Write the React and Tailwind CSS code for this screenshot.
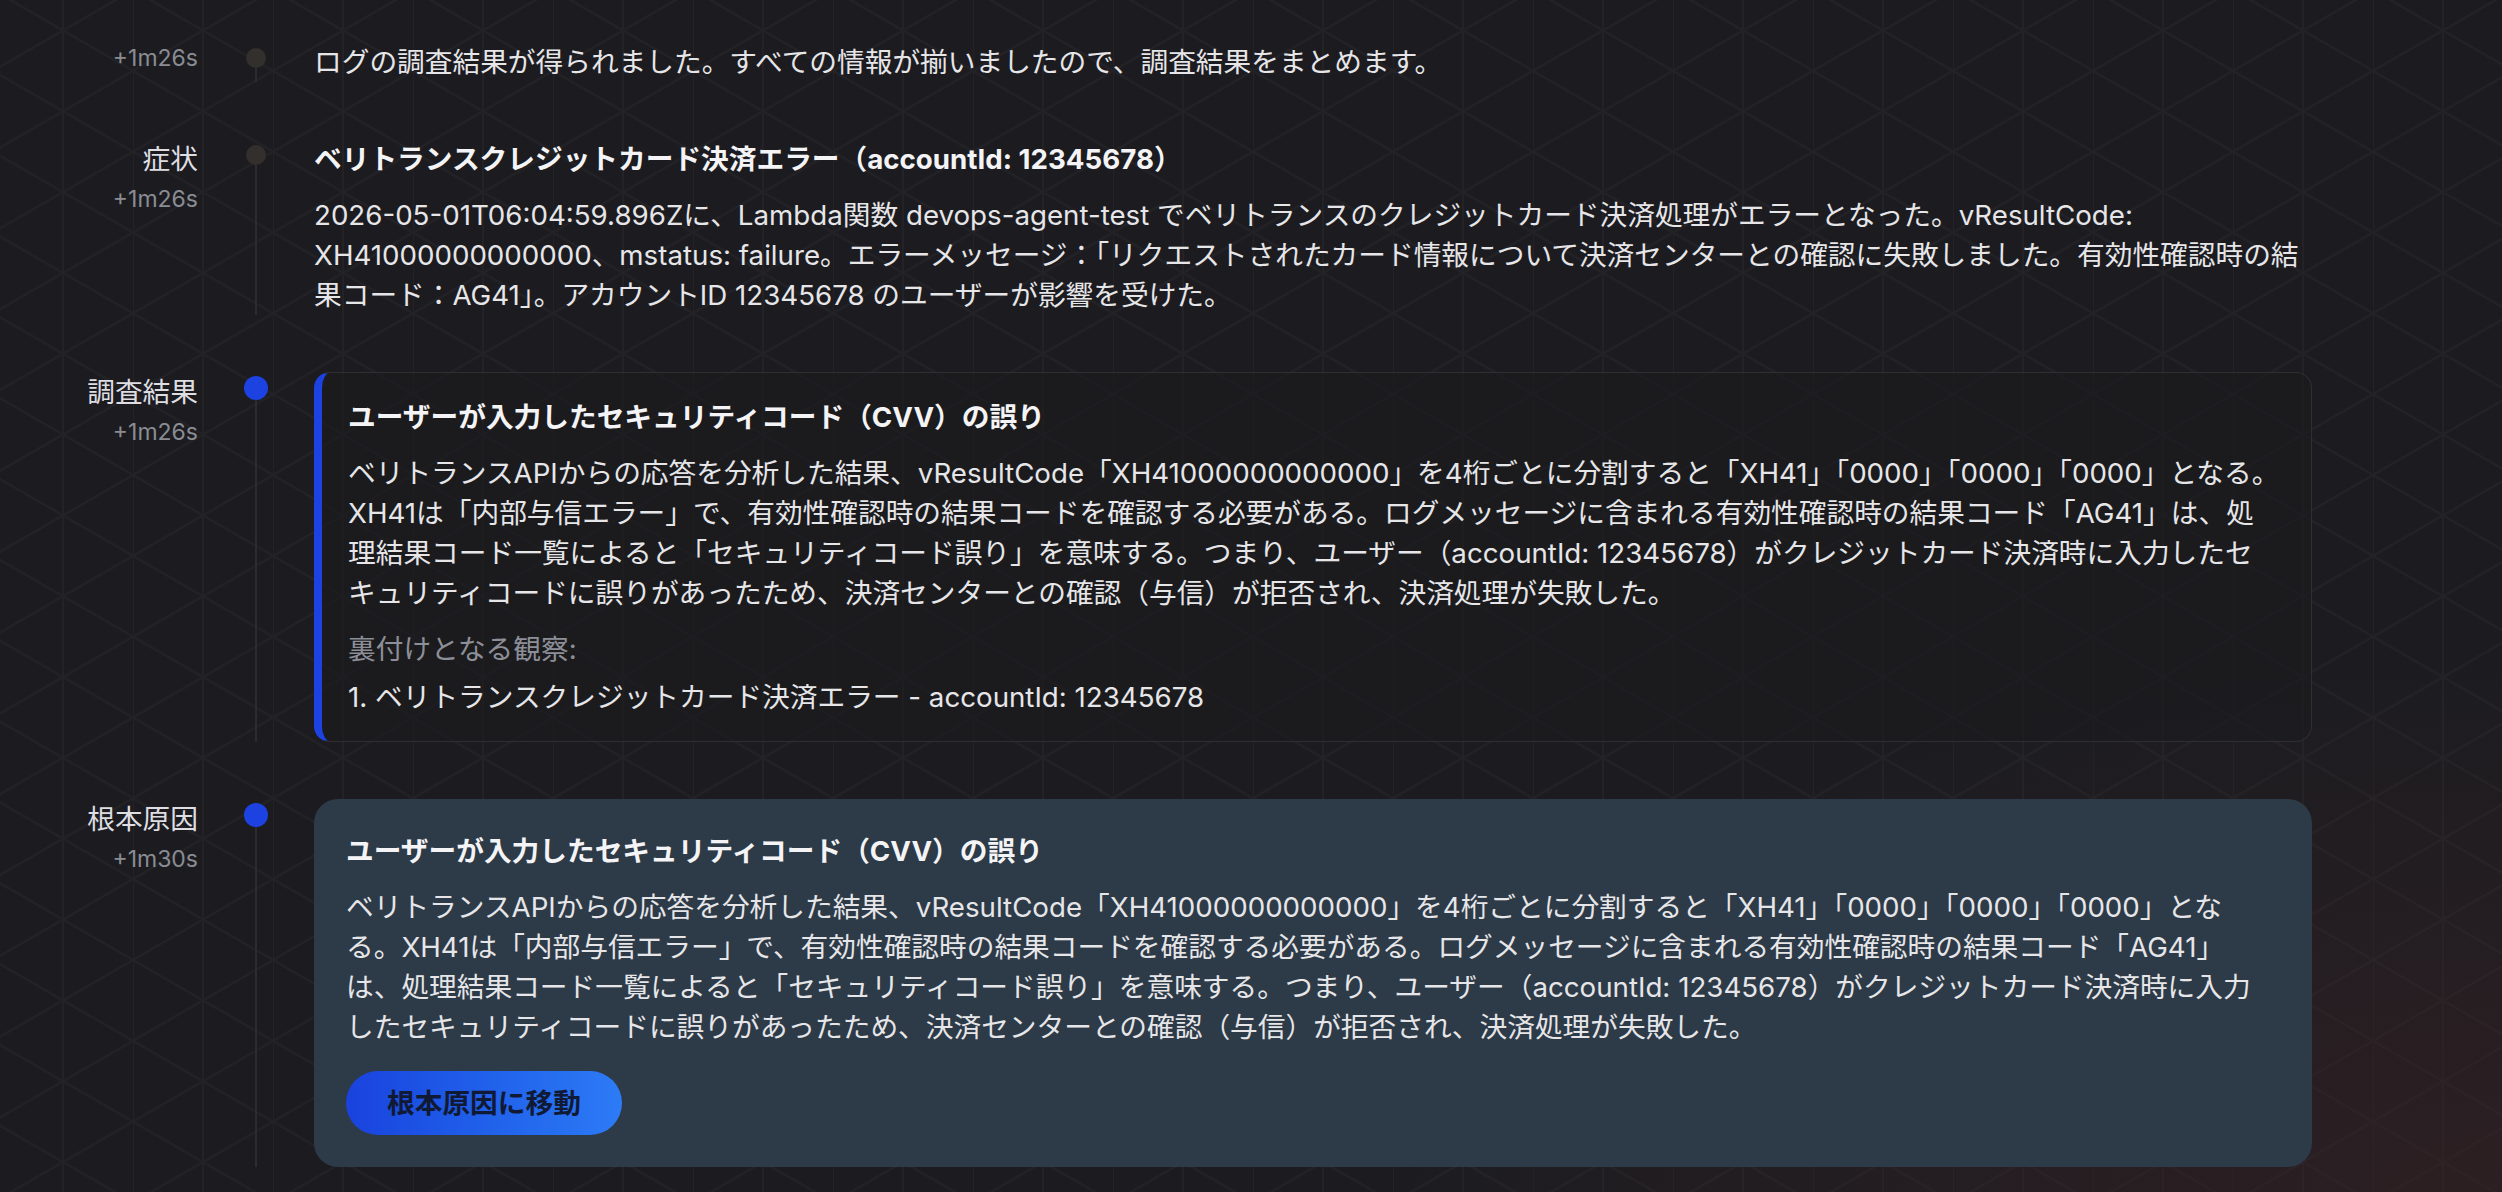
import React from "react";

const symptomLines = [
  "2026-05-01T06:04:59.896Zに、Lambda関数 devops-agent-test でベリトランスのクレジットカード決済処理がエラーとなった。vResultCode:",
  "XH41000000000000、mstatus: failure。エラーメッセージ：「リクエストされたカード情報について決済センターとの確認に失敗しました。有効性確認時の結",
  "果コード：AG41」。アカウントID 12345678 のユーザーが影響を受けた。",
];

const findingLines = [
  "ベリトランスAPIからの応答を分析した結果、vResultCode「XH41000000000000」を4桁ごとに分割すると「XH41」「0000」「0000」「0000」となる。",
  "XH41は「内部与信エラー」で、有効性確認時の結果コードを確認する必要がある。ログメッセージに含まれる有効性確認時の結果コード「AG41」は、処",
  "理結果コード一覧によると「セキュリティコード誤り」を意味する。つまり、ユーザー（accountId: 12345678）がクレジットカード決済時に入力したセ",
  "キュリティコードに誤りがあったため、決済センターとの確認（与信）が拒否され、決済処理が失敗した。",
];

const rootCauseLines = [
  "ベリトランスAPIからの応答を分析した結果、vResultCode「XH41000000000000」を4桁ごとに分割すると「XH41」「0000」「0000」「0000」とな",
  "る。XH41は「内部与信エラー」で、有効性確認時の結果コードを確認する必要がある。ログメッセージに含まれる有効性確認時の結果コード「AG41」",
  "は、処理結果コード一覧によると「セキュリティコード誤り」を意味する。つまり、ユーザー（accountId: 12345678）がクレジットカード決済時に入力",
  "したセキュリティコードに誤りがあったため、決済センターとの確認（与信）が拒否され、決済処理が失敗した。",
];

const Lines = ({ lines, className = "" }) => (
  <div className={className}>
    {lines.map((l, i) => (
      <div key={i} className="whitespace-nowrap">
        {l}
      </div>
    ))}
  </div>
);

const Row = ({ label, time, active, children }) => (
  <div className="flex">
    <div className="w-[198px] shrink-0 text-right">
      {label && <div className="text-[27.7px] leading-[40px] text-[#dedee2]">{label}</div>}
      <div className={`text-[23px] leading-[32px] text-[#8a8c94] ${label ? "mt-1" : ""}`}>{time}</div>
    </div>
    <div className="w-[116px] shrink-0 flex flex-col items-center">
      {active ? (
        <div className="mt-1 h-6 w-6 rounded-full bg-[#1c42e2]" />
      ) : (
        <div className="mt-[6px] h-5 w-5 rounded-full bg-[#322f2c]" />
      )}
      <div className="w-[2px] flex-1 bg-[#2d2c2d]" />
    </div>
    <div className="w-[1998px] shrink-0">{children}</div>
  </div>
);

export default function App() {
  return (
    <div className="relative h-[1192px] w-full overflow-hidden bg-[#1c1c20] font-['Inter','Noto_Sans_CJK_JP',sans-serif] text-[27.7px] leading-[40px] text-[#e6e6e9]">
      {/* background pattern */}
      <svg className="absolute inset-0 h-full w-full" aria-hidden="true">
        <defs>
          <pattern id="tri" x="-7" y="-10" width="140" height="80.83" patternUnits="userSpaceOnUse">
            <path d="M0 0V80.83M70 0V80.83M0 0L140 80.83M0 80.83L140 0" stroke="#232327" strokeWidth="2" fill="none" />
          </pattern>
          <radialGradient id="tint" cx="100%" cy="100%" r="45%">
            <stop offset="0%" stopColor="#3a2225" stopOpacity="0.55" />
            <stop offset="100%" stopColor="#3a2225" stopOpacity="0" />
          </radialGradient>
        </defs>
        <rect width="100%" height="100%" fill="url(#tri)" />
        <rect width="100%" height="100%" fill="url(#tint)" />
      </svg>

      <div className="relative flex flex-col gap-[57px] pt-[42px]">
        <Row time="+1m26s">
          <div>ログの調査結果が得られました。すべての情報が揃いましたので、調査結果をまとめます。</div>
        </Row>

        <Row label="症状" time="+1m26s">
          <div className="font-bold text-[#f4f4f6]">ベリトランスクレジットカード決済エラー（accountId: 12345678）</div>
          <Lines lines={symptomLines} className="mt-4" />
        </Row>

        <Row label="調査結果" time="+1m26s" active>
          <div className="rounded-2xl border border-[#302e30] border-l-[8px] border-l-[#1c42e2] bg-[#1a1a1e]/60 pb-6 pl-[26px] pr-6 pt-6">
            <div className="font-bold text-[#f4f4f6]">ユーザーが入力したセキュリティコード（CVV）の誤り</div>
            <Lines lines={findingLines} className="mt-4" />
            <div className="mt-4 text-[#8d8f98]">裏付けとなる観察:</div>
            <div className="mt-2 whitespace-nowrap">1. ベリトランスクレジットカード決済エラー - accountId: 12345678</div>
          </div>
        </Row>

        <Row label="根本原因" time="+1m30s" active>
          <div className="rounded-3xl bg-[#2d3a47] px-8 py-8">
            <div className="font-bold text-[#f4f4f6]">ユーザーが入力したセキュリティコード（CVV）の誤り</div>
            <Lines lines={rootCauseLines} className="mt-4" />
            <button className="mt-6 h-16 rounded-full bg-linear-to-r from-[#1a42de] to-[#2d7bf6] px-[41px] text-[27.7px] font-bold text-[#101a34]">
              根本原因に移動
            </button>
          </div>
        </Row>
      </div>
    </div>
  );
}
